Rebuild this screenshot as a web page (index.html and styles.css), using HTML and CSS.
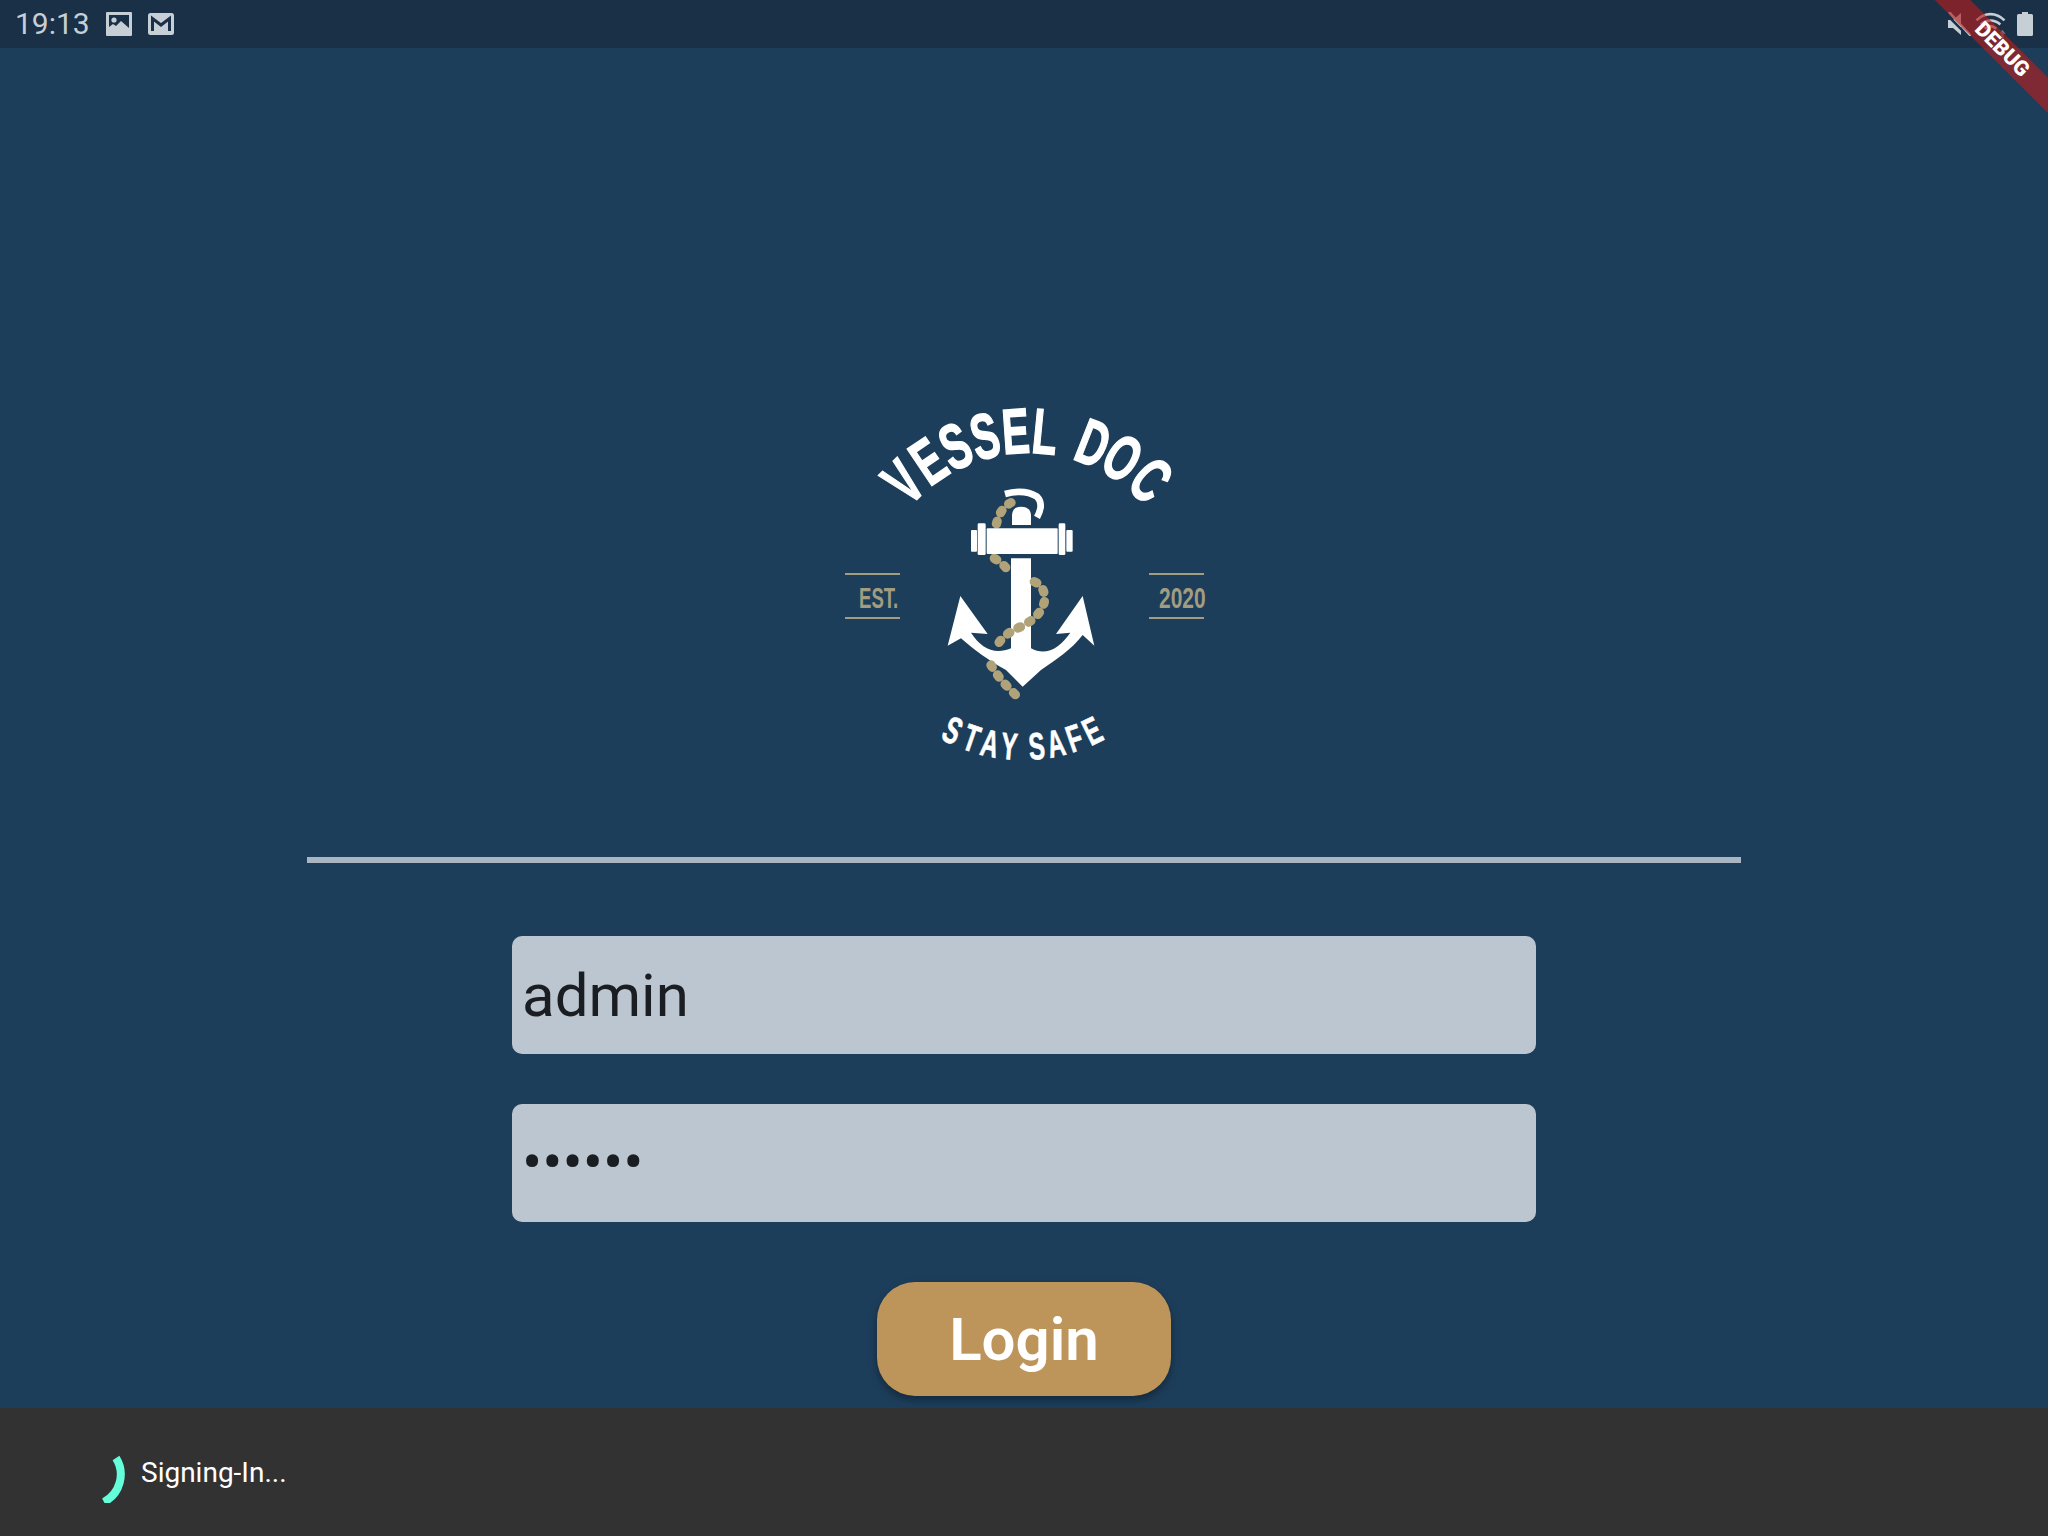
FILE: index.html
```html
<!DOCTYPE html>
<html lang="en">
<head>
<meta charset="utf-8">
<title>Vessel Doc</title>
<link rel="stylesheet" href="styles.css">
</head>
<body>
<div class="app">
  <header class="statusbar">
    <div class="status-left">
      <span class="clock">19:13</span>
      <svg class="ic-image" viewBox="0 0 26 24"><path class="ic-fill" fill-rule="evenodd" d="M1 0h24a1 1 0 0 1 1 1v22a1 1 0 0 1-1 1H1a1 1 0 0 1-1-1V1a1 1 0 0 1 1-1zM3 3v12l4-3 3 2 5-5 8 7V3z"/><circle class="ic-fill" cx="8" cy="8" r="2.6"/></svg>
      <svg class="ic-mail" viewBox="0 0 26 22"><rect class="ic-fill" width="26" height="22" rx="2.5"/><path class="ic-cut" d="M4.500 18V5.500L13 12l8.500-6.500V18"/></svg>
    </div>
    <div class="status-right">
      <svg class="ic-mute" viewBox="0 0 24 24"><path class="ic-fill" d="M1 8h5l8-7v22l-8-7H1z"/><path class="ic-slash-dark" d="M0 1l23 23"/><path class="ic-slash" d="M2 0l22 24"/></svg>
      <svg class="ic-wifi" viewBox="0 0 30 26"><path class="ic-arc" d="M1 9c8-8 19-8 27 0M5 13c6-5 13-5 19 0M9 17c3.500-3 7.500-3 11 0"/><path class="ic-fill ic-dim" d="M26 18l3 4h-2v4h-2v-4h-2z"/></svg>
      <svg class="ic-battery" viewBox="0 0 16 24"><path class="ic-fill" d="M5 0h6v2h3.500a1.500 1.500 0 0 1 1.500 1.500v19a1.500 1.500 0 0 1-1.500 1.500h-13A1.500 1.500 0 0 1 0 22.500v-19A1.500 1.500 0 0 1 1.500 2H5z"/></svg>
    </div>
  </header>

  <main class="login">
    <svg class="logo" viewBox="0 0 390 390" role="img" aria-label="Vessel Doc logo">
      <g class="letters-top">
        <text class="lt" transform="rotate(-44.500 197 219) translate(197 63) scale(.64 1)">V</text>
        <text class="lt" transform="rotate(-34 197 219) translate(197 63) scale(.64 1)">E</text>
        <text class="lt" transform="rotate(-24 197 219) translate(197 63) scale(.64 1)">S</text>
        <text class="lt" transform="rotate(-14 197 219) translate(197 63) scale(.64 1)">S</text>
        <text class="lt" transform="rotate(-4 197 219) translate(197 63) scale(.64 1)">E</text>
        <text class="lt" transform="rotate(5.500 197 219) translate(197 63) scale(.64 1)">L</text>
        <text class="lt" transform="rotate(21.500 197 219) translate(197 63) scale(.64 1)">D</text>
        <text class="lt" transform="rotate(32 197 219) translate(197 63) scale(.64 1)">O</text>
        <text class="lt" transform="rotate(43.500 197 219) translate(197 63) scale(.64 1)">C</text>
      </g>
      <g class="letters-bottom">
        <text class="lb" transform="rotate(26.500 192 199) translate(192 370) scale(.64 1)">S</text>
        <text class="lb" transform="rotate(19 192 199) translate(192 370) scale(.64 1)">T</text>
        <text class="lb" transform="rotate(12 192 199) translate(192 370) scale(.64 1)">A</text>
        <text class="lb" transform="rotate(5 192 199) translate(192 370) scale(.64 1)">Y</text>
        <text class="lb" transform="rotate(-5 192 199) translate(192 370) scale(.64 1)">S</text>
        <text class="lb" transform="rotate(-12 192 199) translate(192 370) scale(.64 1)">A</text>
        <text class="lb" transform="rotate(-19 192 199) translate(192 370) scale(.64 1)">F</text>
        <text class="lb" transform="rotate(-26 192 199) translate(192 370) scale(.64 1)">E</text>
      </g>
      <g class="logo-tan">
        <rect x="14" y="183" width="55" height="2"/><rect x="14" y="227" width="55" height="2"/>
        <rect x="318" y="183" width="55" height="2"/><rect x="318" y="227" width="55" height="2"/>
        <text class="side" transform="translate(28 218) scale(.62 1)">EST.</text>
        <text class="side" transform="translate(328 218) scale(.7 1)">2020</text>
      </g>
      <g transform="translate(100 90) scale(.33333)">
        <path class="rope" d="M240 68Q205 85 195 138"/>
        <path class="rope" d="M190 235Q225 255 238 285"/>
        <path class="anchor" d="M88 348L170 462L120 458C150 505 190 525 240 505V235H300V505C345 530 385 505 418 458L375 462L455 348L490 497L455 465C420 510 380 535 330 570L275 620L225 570C170 540 130 510 90 475L50 497Z"/>
        <rect class="anchor" x="167" y="145" width="213" height="77" rx="3"/>
        <rect class="anchor" x="140" y="130" width="24" height="95" rx="4"/>
        <rect class="anchor" x="120" y="150" width="18" height="65" rx="3"/>
        <rect class="anchor" x="383" y="130" width="20" height="95" rx="4"/>
        <rect class="anchor" x="406" y="150" width="19" height="65" rx="3"/>
        <path class="anchor" d="M243 135V105Q245 80 270 80Q298 80 300 105V135Z"/>
        <path class="hook" d="M222 42Q280 26 318 50Q340 72 318 112"/>
        <path class="rope" d="M310 305Q345 320 340 365Q330 410 270 440Q210 465 195 505"/>
        <path class="rope" d="M180 555Q205 600 265 655"/>
      </g>
    </svg>
    <div class="divider"></div>
    <div class="field field-user">admin</div>
    <div class="field field-pass">••••••</div>
    <button class="login-btn" type="button">Login</button>
  </main>

  <footer class="snackbar">
    <svg class="spinner" viewBox="0 0 60 60"><path d="M47 15A31 31 0 0 1 35 59"/></svg>
    <span class="snack-text">Signing-In...</span>
  </footer>
</div>
<div class="debug-corner"><div class="debug-band">DEBUG</div></div>
</body>
</html>
```
FILE: styles.css
```css
* { box-sizing: border-box; }
html, body { margin: 0; height: 100%; overflow: hidden; }
body { font-family: Roboto, "Liberation Sans", sans-serif; background: #1d3e5b; }

.app { display: flex; flex-direction: column; width: 2048px; height: 1536px; }

.statusbar {
  height: 48px; flex: none; background: #1a3047;
  display: flex; align-items: center; justify-content: space-between;
  padding: 0 15px;
}
.status-left, .status-right { display: flex; align-items: center; }
.clock { font-size: 30px; color: #c6ced6; line-height: 48px; width: 91px; }
.ic-image { width: 26px; height: 24px; margin-right: 16px; }
.ic-mail { width: 26px; height: 22px; }
.ic-fill { fill: #c6ced6; }
.ic-dim { opacity: .45; }
.ic-cut { fill: none; stroke: #1a3047; stroke-width: 3; }
.ic-mute { width: 24px; height: 24px; margin-right: 4px; }
.ic-slash { stroke: #c6ced6; stroke-width: 2.5; }
.ic-slash-dark { stroke: #1a3047; stroke-width: 2.5; transform: translate(-2px, 0); }
.ic-wifi { width: 32px; height: 27px; margin-right: 10px; }
.ic-arc { fill: none; stroke: #c6ced6; stroke-width: 2.5; }
.ic-battery { width: 16px; height: 24px; }

.login { flex: 1; display: flex; flex-direction: column; align-items: center; padding-top: 342px; min-height: 0; }
.logo { width: 390px; height: 390px; flex: none; margin-left: 3px; }
.lt, .lb, .side { font-family: "Liberation Sans", sans-serif; font-weight: 700; }
.lt { font-size: 64px; fill: #fff; stroke: #fff; stroke-width: 1.5; text-anchor: middle; }
.lb { font-size: 38px; fill: #fff; stroke: #fff; stroke-width: .6; text-anchor: middle; }
.side { font-size: 30px; fill: #a29c80; }
.logo-tan rect { fill: #a29c80; }
.anchor { fill: #fff; }
.hook { fill: none; stroke: #fff; stroke-width: 20; }
.rope { fill: none; stroke: #b0a279; stroke-width: 28; stroke-linecap: round; stroke-dasharray: 8 28; }

.divider { width: 1434px; height: 6px; background: #a9b6c2; margin-top: 77px; flex: none; }
.field {
  width: 1024px; height: 118px; flex: none; background: #bcc6d0; border-radius: 10px;
  color: #1a1e22; font-size: 60px; display: flex; align-items: center; padding: 0 10px;
}
.field-user { margin-top: 73px; }
.field-pass { margin-top: 50px; padding-bottom: 2px; }
.login-btn {
  width: 294px; height: 114px; flex: none; margin-top: 60px; border: 0; border-radius: 38px;
  background: #bd955b; color: #fff; font: 600 60px Roboto, sans-serif;
  box-shadow: 0 4px 8px rgba(0, 0, 0, .35);
}

.snackbar {
  height: 128px; flex: none; background: #323232; display: flex; align-items: center; padding-left: 69px;
}
.spinner { width: 60px; height: 60px; flex: none; margin: 2px 12px 0 0; }
.spinner path { fill: none; stroke: #64ffda; stroke-width: 8; }
.snack-text { color: #fff; font-size: 28px; }

.debug-corner { position: absolute; top: 0; right: 0; width: 116px; height: 116px; overflow: hidden; }
.debug-band {
  position: absolute; left: -18px; top: 37px; width: 176px; height: 25px;
  transform: rotate(45deg); background: rgba(183, 28, 28, .63);
  color: #fff; font-size: 21px; font-weight: 900; line-height: 25px; text-align: center;
}
```
